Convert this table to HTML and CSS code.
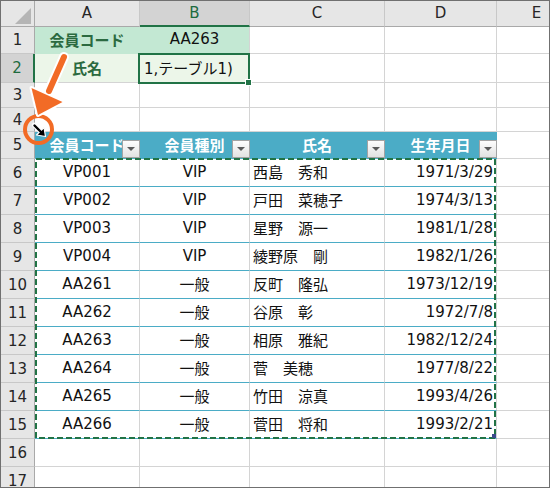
FILE: index.html
```html
<!DOCTYPE html>
<html lang="ja">
<head>
<meta charset="utf-8">
<title>Sheet</title>
<link rel="stylesheet" href="styles.css">
</head>
<body>
<div class="frame">
  <div class="sheet">
    <div class="corner"><svg width="34" height="26" viewBox="0 0 34 26"><polygon points="30,7 30,23 14,23" fill="#b5b5b5"/></svg></div>
    <div class="ch">A</div>
    <div class="ch sel">B</div>
    <div class="ch">C</div>
    <div class="ch">D</div>
    <div class="ch">E</div>

    <div class="rh">1</div>
    <div class="c f1 lbl center">会員コード</div>
    <div class="c f1b center">AA263</div>
    <div class="c"></div><div class="c"></div><div class="c"></div>

    <div class="rh sel">2</div>
    <div class="c f2 lbl center">氏名</div>
    <div class="c f2 active">1,テーブル1)</div>
    <div class="c"></div><div class="c"></div><div class="c"></div>

    <div class="rh">3</div>
    <div class="c"></div><div class="c"></div><div class="c"></div><div class="c"></div><div class="c"></div>

    <div class="rh">4</div>
    <div class="c"></div><div class="c"></div><div class="c"></div><div class="c"></div><div class="c"></div>

    <div class="rh">5</div>
    <div class="c th center">会員コード<span class="dd"></span></div>
    <div class="c th center">会員種別<span class="dd"></span></div>
    <div class="c th center">氏名<span class="dd"></span></div>
    <div class="c th center">生年月日<span class="dd"></span></div>
    <div class="c"></div>

    <div class="rh">6</div>
    <div class="c td center">VP001</div><div class="c td center">VIP</div><div class="c td">西島　秀和</div><div class="c td right">1971/3/29</div><div class="c"></div>
    <div class="rh">7</div>
    <div class="c td center">VP002</div><div class="c td center">VIP</div><div class="c td">戸田　菜穂子</div><div class="c td right">1974/3/13</div><div class="c"></div>
    <div class="rh">8</div>
    <div class="c td center">VP003</div><div class="c td center">VIP</div><div class="c td">星野　源一</div><div class="c td right">1981/1/28</div><div class="c"></div>
    <div class="rh">9</div>
    <div class="c td center">VP004</div><div class="c td center">VIP</div><div class="c td">綾野原　剛</div><div class="c td right">1982/1/26</div><div class="c"></div>
    <div class="rh">10</div>
    <div class="c td center">AA261</div><div class="c td center">一般</div><div class="c td">反町　隆弘</div><div class="c td right">1973/12/19</div><div class="c"></div>
    <div class="rh">11</div>
    <div class="c td center">AA262</div><div class="c td center">一般</div><div class="c td">谷原　彰</div><div class="c td right">1972/7/8</div><div class="c"></div>
    <div class="rh">12</div>
    <div class="c td center">AA263</div><div class="c td center">一般</div><div class="c td">相原　雅紀</div><div class="c td right">1982/12/24</div><div class="c"></div>
    <div class="rh">13</div>
    <div class="c td center">AA264</div><div class="c td center">一般</div><div class="c td">菅　美穂</div><div class="c td right">1977/8/22</div><div class="c"></div>
    <div class="rh">14</div>
    <div class="c td center">AA265</div><div class="c td center">一般</div><div class="c td">竹田　涼真</div><div class="c td right">1993/4/26</div><div class="c"></div>
    <div class="rh">15</div>
    <div class="c td center">AA266</div><div class="c td center">一般</div><div class="c td">菅田　将和</div><div class="c td right">1993/2/21</div><div class="c"></div>

    <div class="rh">16</div>
    <div class="c"></div><div class="c"></div><div class="c"></div><div class="c"></div><div class="c"></div>
    <div class="rh">17</div>
    <div class="c"></div><div class="c"></div><div class="c"></div><div class="c"></div><div class="c"></div>
  </div>

  <svg class="overlay" width="550" height="488" viewBox="0 0 550 488">
    <rect x="36" y="159" width="459" height="279" fill="none" stroke="#217346" stroke-width="2" stroke-dasharray="6 3"/>
    <rect x="492" y="434" width="4" height="4" fill="#3c4a8c"/>
    <circle cx="38.5" cy="129.5" r="13.5" fill="none" stroke="#f26b26" stroke-width="4"/>
    <line x1="64" y1="57" x2="49" y2="91" stroke="#ffffff" stroke-width="10" stroke-linecap="round"/>
    <polygon points="31.5,88 62.5,102 38,115" fill="#ffffff" stroke="#ffffff" stroke-width="4" stroke-linejoin="round"/>
    <line x1="64" y1="57" x2="49" y2="91" stroke="#f26b26" stroke-width="6" stroke-linecap="round"/>
    <polygon points="31.5,88 62.5,102 38,115" fill="#f26b26"/>
    <line x1="34" y1="125" x2="41" y2="132" stroke="#ffffff" stroke-width="4.5" stroke-linecap="round"/>
    <polygon points="45.5,136.5 36.5,135 44,127.5" fill="#000" stroke="#fff" stroke-width="1.2" stroke-linejoin="round"/>
    <line x1="34.5" y1="125.5" x2="41" y2="132" stroke="#000000" stroke-width="2.4" stroke-linecap="round"/>
  </svg>
</div>
</body>
</html>
```

FILE: styles.css
```css
html, body {
  margin: 0;
  padding: 0;
  background: #ffffff;
}

.frame {
  position: relative;
  width: 550px;
  height: 488px;
  box-sizing: border-box;
  border: 1px solid #707070;
  overflow: hidden;
  font-family: "DejaVu Sans", "Noto Sans CJK JP", sans-serif;
  font-size: 15px;
  color: #111111;
}

.sheet {
  display: grid;
  grid-template-columns: 34px 105px 110px 135px 112px 80px;
  grid-template-rows: 26px 27px 29px 25px 24px 27px repeat(11, 28px) 28px;
  width: 576px;
}

.corner {
  background: #e6e6e6;
  border-right: 1px solid #a9a9a9;
  border-bottom: 1px solid #a9a9a9;
  box-sizing: border-box;
}
.corner svg { display: block; }

.ch {
  background: #e6e6e6;
  border-right: 1px solid #c8c8c8;
  border-bottom: 1px solid #a9a9a9;
  box-sizing: border-box;
  display: flex;
  align-items: center;
  justify-content: center;
  color: #262626;
  padding-bottom: 1px;
}
.ch.sel {
  background: #d3d3d3;
  color: #1e6b3e;
  border-bottom: 2px solid #217346;
}

.rh {
  background: #e6e6e6;
  border-right: 1px solid #a9a9a9;
  border-bottom: 1px solid #c8c8c8;
  box-sizing: border-box;
  display: flex;
  align-items: center;
  justify-content: center;
  color: #262626;
}
.rh.sel {
  background: #d3d3d3;
  color: #1e6b3e;
  border-right: 2px solid #217346;
}

.c {
  border-right: 1px solid #d4d4d4;
  border-bottom: 1px solid #d4d4d4;
  box-sizing: border-box;
  display: flex;
  align-items: center;
  padding: 0 3px 2px 3px;
  white-space: nowrap;
  min-width: 0;
}
.center { justify-content: center; }
.right { justify-content: flex-end; }

.f1 {
  background: #c3e8d3;
  border-right-color: #c3e8d3;
  border-bottom-color: #c3e8d3;
}
.f1b {
  background: #c3e8d3;
  border-bottom-color: #c3e8d3;
}
.f2 {
  background: #ecf6e9;
  border-right-color: #ecf6e9;
}
.lbl {
  font-weight: bold;
  color: #2b6a40;
}

.active {
  position: relative;
  padding-left: 4px;
}
.active::before {
  content: "";
  position: absolute;
  left: -2px;
  top: -1px;
  width: 112px;
  height: 31px;
  box-sizing: border-box;
  border: 2px solid #217346;
}
.active::after {
  content: "";
  position: absolute;
  left: 105px;
  top: 25px;
  width: 5px;
  height: 5px;
  background: #217346;
  border: 1px solid #ffffff;
}

.th {
  position: relative;
  background: #4bacc6;
  border-right-color: #4bacc6;
  border-bottom-color: #4bacc6;
  color: #ffffff;
  font-weight: bold;
}
.dd {
  position: absolute;
  right: -1px;
  bottom: 0;
  width: 18px;
  height: 18px;
  box-sizing: border-box;
  border: 1px solid #a3a3a3;
  background: linear-gradient(#fdfdfd, #e2e2e2);
}
.dd::after {
  content: "";
  position: absolute;
  left: 4px;
  top: 6px;
  border-left: 4px solid transparent;
  border-right: 4px solid transparent;
  border-top: 4px solid #5a5a5a;
}

.td {
  border-bottom-color: #4bacc6;
}

.overlay {
  position: absolute;
  left: -1px;
  top: -1px;
  pointer-events: none;
}
```
